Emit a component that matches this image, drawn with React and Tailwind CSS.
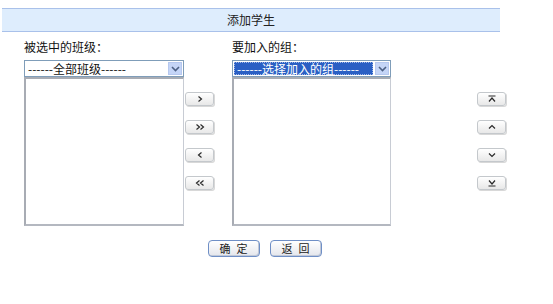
import React from 'react';

const font = { fontFamily: '"Noto Sans CJK SC", "Noto Sans", sans-serif' };

const Chevron = () => (
  <svg width="9" height="6" viewBox="0 0 9 6">
    <path d="M1 1 L4.5 4.5 L8 1" fill="none" stroke="#4d6185" strokeWidth="1.6" />
  </svg>
);

const SelectBox = ({ text, selected }) => (
  <div className="h-[17px] border border-[#7f9db9] bg-white flex items-stretch p-[1px]">
    <div className={`flex-1 flex items-center pl-[2px] text-[12px] leading-none ${selected ? 'bg-[#2a5fc4] text-white border border-dotted border-[#9fb6e6]' : 'text-[#111]'}`}>
      {text}
    </div>
    <div className="w-[14px] ml-[2px] bg-[#c5d5f7] border border-[#b6c8ef] flex items-center justify-center">
      <Chevron />
    </div>
  </div>
);

const ListBox = () => (
  <div className="h-[149px] bg-white border-l-2 border-t-2 border-r border-b-2 border-l-[#a8acb4] border-t-[#a8acb4] border-r-[#c8ccd4] border-b-[#b4b8c0]" />
);

const SmallBtn = ({ children }) => (
  <div className="w-[29px] h-[14px] rounded-[3px] border border-[#c4c8cc] bg-gradient-to-b from-white to-[#e8e8e8] shadow-[1px_1px_0_#d8d8d8] flex items-center justify-center text-[#333]">
    {children}
  </div>
);

const Glyph = ({ d }) => (
  <svg width="10" height="8" viewBox="0 0 10 8">
    <path d={d} fill="none" stroke="#2a2a2a" strokeWidth="1.2" />
  </svg>
);

const BigBtn = ({ children }) => (
  <div className="w-[52px] h-[17px] rounded-[4px] border border-[#6f8fc6] bg-gradient-to-b from-white to-[#e4e6ec] shadow-[inset_-1px_-1px_0_#c0c8d8] flex items-center justify-center text-[11px] text-[#222] tracking-[6px] pl-[6px] leading-none">
    {children}
  </div>
);

export default function App() {
  return (
    <div className="w-[553px] h-[304px] bg-white text-[12px] text-[#111]" style={font}>
      <div className="pt-[8px] pl-[2px]">
        <div className="w-[498px] h-[24px] border-y border-[#a9c1ea] bg-[#deedfd] flex items-center justify-center text-[12px] text-[#222]">
          添加学生
        </div>
      </div>

      <div className="flex pl-[24px] mt-[7px] h-[16px] items-center">
        <div className="w-[208px]">被选中的班级：</div>
        <div>要加入的组：</div>
      </div>

      <div className="flex pl-[24px] mt-[5px]">
        <div className="w-[160px] flex flex-col">
          <SelectBox text="------全部班级------" />
          <ListBox />
        </div>

        <div className="w-[48px] pl-[1px] pt-[32px] flex flex-col gap-[14px]">
          <SmallBtn><Glyph d="M3.5 1.5 L6.5 4 L3.5 6.5" /></SmallBtn>
          <SmallBtn><Glyph d="M1.5 1.5 L4.5 4 L1.5 6.5 M5.5 1.5 L8.5 4 L5.5 6.5" /></SmallBtn>
          <SmallBtn><Glyph d="M6.5 1.5 L3.5 4 L6.5 6.5" /></SmallBtn>
          <SmallBtn><Glyph d="M4.5 1.5 L1.5 4 L4.5 6.5 M8.5 1.5 L5.5 4 L8.5 6.5" /></SmallBtn>
        </div>

        <div className="w-[159px] flex flex-col">
          <SelectBox text="------选择加入的组------" selected />
          <ListBox />
        </div>

        <div className="ml-[86px] pt-[32px] flex flex-col gap-[14px]">
          <SmallBtn><Glyph d="M1.5 1 L8.5 1 M2 6.5 L5 3 L8 6.5" /></SmallBtn>
          <SmallBtn><Glyph d="M2 5.5 L5 2.5 L8 5.5" /></SmallBtn>
          <SmallBtn><Glyph d="M2 2.5 L5 5.5 L8 2.5" /></SmallBtn>
          <SmallBtn><Glyph d="M2 1.5 L5 5 L8 1.5 M1.5 7 L8.5 7" /></SmallBtn>
        </div>
      </div>

      <div className="flex justify-center gap-[10px] mt-[14px] pr-[24px]">
        <BigBtn>确定</BigBtn>
        <BigBtn>返回</BigBtn>
      </div>
    </div>
  );
}
